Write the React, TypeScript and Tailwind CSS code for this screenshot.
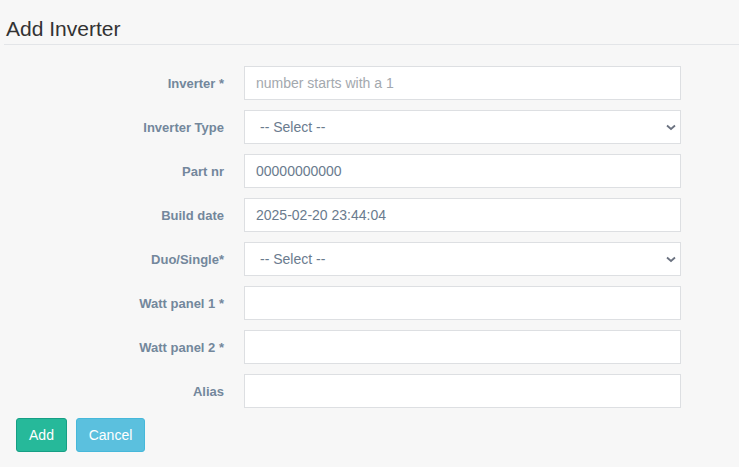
import React from 'react';

const fields: { label: string; kind: 'input' | 'select'; value?: string; placeholder?: string }[] = [
  { label: 'Inverter *', kind: 'input', placeholder: 'number starts with a 1' },
  { label: 'Inverter Type', kind: 'select' },
  { label: 'Part nr', kind: 'input', value: '00000000000' },
  { label: 'Build date', kind: 'input', value: '2025-02-20 23:44:04' },
  { label: 'Duo/Single*', kind: 'select' },
  { label: 'Watt panel 1 *', kind: 'input' },
  { label: 'Watt panel 2 *', kind: 'input' },
  { label: 'Alias', kind: 'input' },
];

const Chevron = () => (
  <svg width="10" height="7" viewBox="0 0 10 7" className="pointer-events-none absolute right-[5px] top-[14px]">
    <path d="M1 1.5 L5 5 L9 1.5" fill="none" stroke="#6b7280" strokeWidth="1.8" />
  </svg>
);

export default function App() {
  return (
    <div className="min-h-[467px] w-[739px] bg-[#f7f7f7] font-['Liberation_Sans',Arial,sans-serif]">
      <div className="ml-[4px] border-b border-[#e3e5e8] pb-[3px] pt-[17px]">
        <h2 className="pl-[2px] text-[21px] leading-[24px] text-[#333333]">Add Inverter</h2>
      </div>

      <form className="mt-[21px]" onSubmit={(e) => e.preventDefault()}>
        <div className="flex flex-col gap-[10px]">
          {fields.map((f) => (
            <div key={f.label} className="flex items-center">
              <label className="w-[224px] pt-[1px] text-right text-[13px] font-bold text-[#73879c]">{f.label}</label>
              <div className="relative ml-[20px] h-[34px] w-[437px]">
                {f.kind === 'input' ? (
                  <input
                    defaultValue={f.value}
                    placeholder={f.placeholder}
                    className="h-full w-full border border-[#dddfe2] bg-white px-[11px] text-[14px] text-[#6a7b8e] outline-none placeholder:text-[#a3a8ae]"
                  />
                ) : (
                  <>
                    <select className="h-full w-full appearance-none border border-[#dddfe2] bg-white px-[15px] text-[14px] text-[#6a7b8e] outline-none">
                      <option>-- Select --</option>
                    </select>
                    <Chevron />
                  </>
                )}
              </div>
            </div>
          ))}
        </div>

        <div className="ml-[16px] mt-[10px] flex gap-[9px]">
          <button type="submit" className="h-[34px] w-[51px] rounded-[3px] border border-[#169f85] bg-[#26b99a] text-[14px] text-white">
            Add
          </button>
          <button type="button" className="h-[34px] w-[69px] rounded-[3px] border border-[#46b8da] bg-[#5bc0de] text-[14px] text-white">
            Cancel
          </button>
        </div>
      </form>
    </div>
  );
}
